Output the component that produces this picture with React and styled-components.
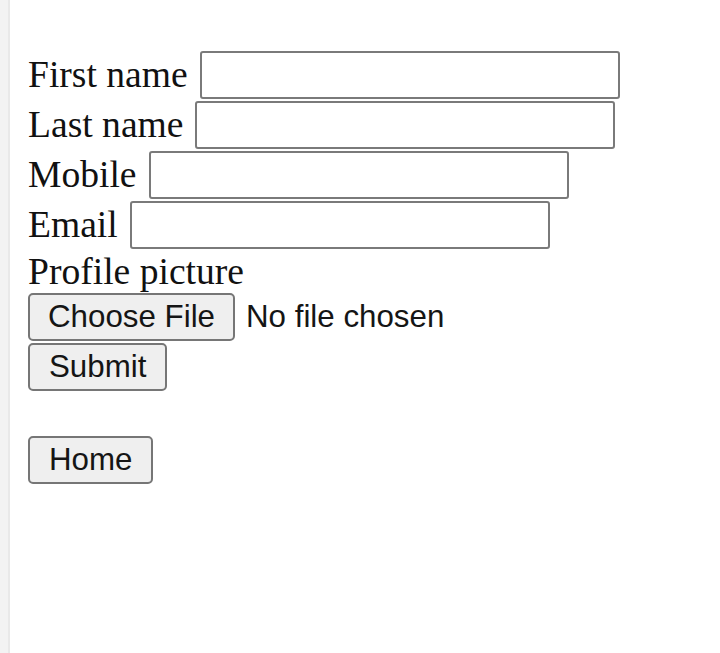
import styled, { createGlobalStyle } from 'styled-components'

const GlobalStyle = createGlobalStyle`
  html, body {
    margin: 0;
    padding: 0;
    background: #ffffff;
  }
`

const Page = styled.div`
  display: flex;
  min-height: 100vh;
`

const EdgeStrip = styled.div`
  width: 8px;
  background: #f3f3f3;
  border-right: 2px solid #e9e9e9;
  flex-shrink: 0;
`

const Content = styled.div`
  flex: 1;
  padding: 50px 0 0 18px;
  color: #111;
  font-family: "Liberation Serif", "Times New Roman", serif;
  font-size: 37.6px;
`

const Form = styled.form`
  display: flex;
  flex-direction: column;
  align-items: flex-start;
`

const Row = styled.div`
  display: flex;
  align-items: center;
  gap: 12px;
  height: 50px;
`

const Label = styled.label`
  line-height: 1.15;
`

const TextInput = styled.input`
  box-sizing: border-box;
  width: 420px;
  height: 48px;
  border: 2px solid #7a7a7a;
  border-radius: 3px;
  background: #fff;
  padding: 2px 5px;
  font-size: 31px;
  font-family: "Liberation Sans", Arial, sans-serif;
`

const Caption = styled.div`
  height: 43px;
  line-height: 43px;
`

const Button = styled.button`
  box-sizing: border-box;
  height: 48px;
  padding: 0 ${p => p.$pad || 19}px;
  border: 2px solid #767676;
  border-radius: 5px;
  background: #efefef;
  color: #151515;
  font-family: "Liberation Sans", Arial, sans-serif;
  font-size: 31.3px;
  margin-top: ${p => p.$top || 0}px;
`

const FileRow = styled.div`
  display: flex;
  align-items: center;
  gap: 11px;
  height: 48px;
  font-family: "Liberation Sans", Arial, sans-serif;
  font-size: 31.3px;
  color: #151515;
`

const fields = ['First name', 'Last name', 'Mobile', 'Email']

const App = () => {
  return (
    <Page>
      <GlobalStyle />
      <EdgeStrip />
      <Content>
        <Form onSubmit={e => e.preventDefault()}>
          {fields.map(f => (
            <Row key={f}>
              <Label>{f}</Label>
              <TextInput type={f === 'Email' ? 'email' : 'text'} />
            </Row>
          ))}
          <Caption>Profile picture</Caption>
          <FileRow>
            <Button type="button" $pad={18}>Choose File</Button>
            <span>No file chosen</span>
          </FileRow>
          <Button type="submit" $top={2}>Submit</Button>
          <Button type="button" $top={45}>Home</Button>
        </Form>
      </Content>
    </Page>
  )
}

export default App
